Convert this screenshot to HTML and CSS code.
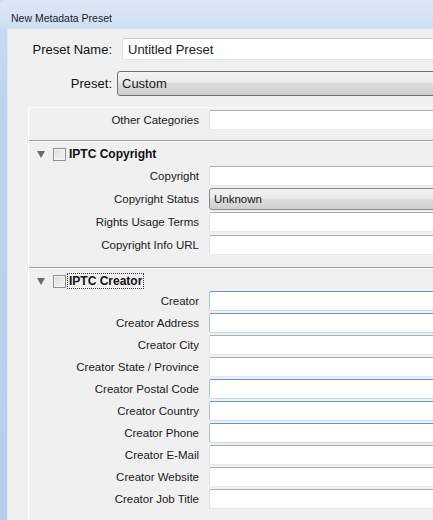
FILE: index.html
```html
<!DOCTYPE html>
<html>
<head>
<meta charset="utf-8">
<link rel="stylesheet" href="styles.css">
</head>
<body>
<div class="window">
  <div class="titlebar">New Metadata Preset</div>
  <div class="client">
    <div class="toprow name-row">
      <span class="big-label">Preset Name:</span>
      <div class="textbox big">Untitled Preset</div>
    </div>
    <div class="toprow preset-row">
      <span class="big-label">Preset:</span>
      <div class="select big-select">Custom</div>
    </div>
    <div class="panel">
      <div class="section first">
        <div class="row other"><span class="label">Other Categories</span><div class="textbox"></div></div>
      </div>
      <div class="section copyright">
        <div class="header"><span class="tri"></span><span class="check"></span><span class="htitle">IPTC Copyright</span></div>
        <div class="row r23"><span class="label">Copyright</span><div class="textbox"></div></div>
        <div class="row r23"><span class="label">Copyright Status</span><div class="select">Unknown</div></div>
        <div class="row r23"><span class="label">Rights Usage Terms</span><div class="textbox"></div></div>
        <div class="row r23"><span class="label">Copyright Info URL</span><div class="textbox"></div></div>
      </div>
      <div class="section creator">
        <div class="header"><span class="tri"></span><span class="check"></span><span class="htitle focus">IPTC Creator</span></div>
        <div class="row"><span class="label">Creator</span><div class="textbox hover"></div></div>
        <div class="row"><span class="label">Creator Address</span><div class="textbox hover"></div></div>
        <div class="row"><span class="label">Creator City</span><div class="textbox"></div></div>
        <div class="row"><span class="label">Creator State / Province</span><div class="textbox"></div></div>
        <div class="row"><span class="label">Creator Postal Code</span><div class="textbox hover"></div></div>
        <div class="row"><span class="label">Creator Country</span><div class="textbox hover"></div></div>
        <div class="row"><span class="label">Creator Phone</span><div class="textbox hover"></div></div>
        <div class="row"><span class="label">Creator E-Mail</span><div class="textbox"></div></div>
        <div class="row"><span class="label">Creator Website</span><div class="textbox"></div></div>
        <div class="row"><span class="label">Creator Job Title</span><div class="textbox"></div></div>
      </div>
    </div>
  </div>
</div>
</body>
</html>
```
FILE: styles.css
```css
* { box-sizing: border-box; }
html, body { margin: 0; padding: 0; }
body {
  width: 433px;
  height: 520px;
  overflow: hidden;
  font-family: "Liberation Sans", Arial, sans-serif;
  color: #1a1a1a;
}
.window {
  width: 433px;
  height: 520px;
  overflow: hidden;
  background: linear-gradient(to bottom, #c9dcf1 0px, #bcd3ec 120px, #b8cfe9 520px);
}
.titlebar {
  height: 29px;
  padding: 12px 0 0 11px;
  font-size: 10.5px;
  color: #1e1e1e;
  background: linear-gradient(to bottom, #dce8f6, #cddff2);
  border-top-left-radius: 6px;
}
.client {
  margin-left: 7px;
  width: 460px;
  height: 491px;
  overflow: hidden;
  background: #f0f0f0;
  border-left: 1px solid #dfe7f0;
  padding-top: 9px;
}
.toprow {
  display: flex;
  align-items: center;
}
.big-label {
  width: 104px;
  text-align: right;
  font-size: 13px;
  color: #111;
}
.name-row { height: 22px; }
.name-row .textbox { margin-left: 10px; }
.preset-row { height: 25px; margin-top: 11px; }
.preset-row .select { margin-left: 5px; }
.textbox {
  flex: 1;
  height: 20px;
  background: #fff;
  border: 1px solid #dfe0e6;
  border-top-color: #abadb3;
  border-bottom-color: #e3e9ef;
  border-radius: 2px;
  font-size: 11.5px;
  display: flex;
  align-items: center;
  padding-left: 4px;
}
.textbox.big {
  height: 22px;
  font-size: 13px;
  padding-left: 5px;
  border-color: #e4e4e4;
  border-top-color: #c9c9c9;
}
.textbox.hover {
  border-color: #c5daed;
  border-top-color: #5e9ac8;
  border-left-color: #a9c8e4;
}
.select {
  flex: 1;
  height: 21px;
  border: 1px solid #8a8a8a;
  border-radius: 3px;
  background: linear-gradient(to bottom, #f3f3f3 0%, #ebebeb 45%, #dddddd 50%, #cfcfcf 100%);
  font-size: 11.5px;
  display: flex;
  align-items: center;
  padding-left: 4px;
}
.select.big-select {
  height: 25px;
  font-size: 13px;
  border-color: #707070;
}
.panel {
  margin-left: 20px;
  margin-top: 11px;
  border-left: 1px solid #ffffff;
  border-top: 1px solid #fbfbfb;
  padding-top: 2px;
  padding-bottom: 40px;
}
.section {
  border-top: 1px solid #a0a0a0;
  box-shadow: inset 0 1px 0 #ffffff;
}
.section.first {
  border-top: none;
  box-shadow: none;
  padding-bottom: 10px;
}
.section.copyright { padding-bottom: 11px; }
.row {
  display: flex;
  align-items: center;
  height: 22px;
}
.row.r23 { height: 23px; }
.row.other { height: 20px; }
.label {
  width: 170px;
  text-align: right;
  font-size: 11.5px;
  color: #1a1a1a;
  margin-right: 10px;
}
.row .select { height: 22px; }
.header {
  display: flex;
  align-items: center;
  padding-left: 8px;
}
.copyright .header { height: 23px; padding-top: 3px; }
.creator .header { height: 22px; padding-top: 4px; }
.tri {
  width: 0;
  height: 0;
  border-left: 4px solid transparent;
  border-right: 4px solid transparent;
  border-top: 7px solid #6b6b6b;
  margin-right: 8px;
}
.check {
  width: 13px;
  height: 13px;
  border: 1px solid #8e8f8f;
  background: linear-gradient(135deg, #dcdcdc, #f6f6f6);
  box-shadow: inset 0 0 0 1px #f4f4f4;
  margin-right: 1px;
}
.htitle {
  font-weight: bold;
  font-size: 12px;
  color: #111;
  padding: 0 1px;
  border: 1px dotted transparent;
}
.htitle.focus { border-color: #333; }
```
